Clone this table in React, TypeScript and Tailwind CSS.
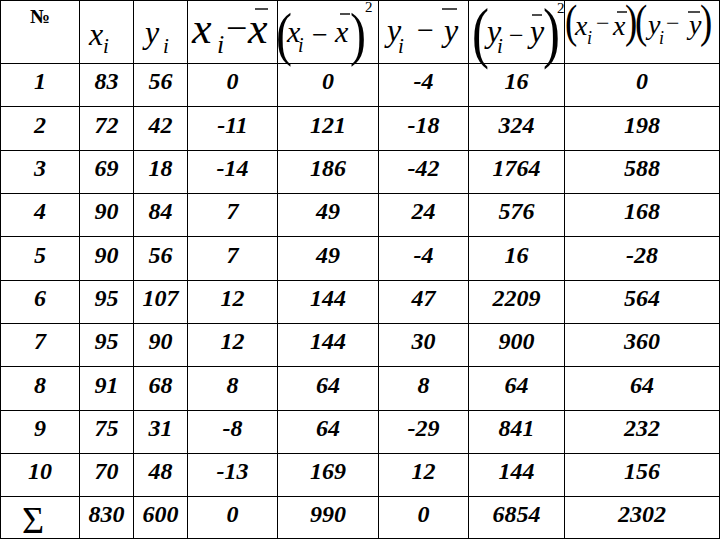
import React from "react";

const FONT = "Liberation Serif";

type P = { x: number; y: number; s: number; t: string; it?: boolean };

function T({ x, y, s, t, it }: P) {
  return (
    <text x={x} y={y} fontSize={s} fontFamily={FONT} fontStyle={it ? "italic" : "normal"} fill="#000">
      {t}
    </text>
  );
}

function Paren({ x, y, s, t, sx = 0.8 }: { x: number; y: number; s: number; t: string; sx?: number }) {
  return (
    <text
      transform={`translate(${x} ${y}) scale(${sx} 1)`}
      x={0}
      y={0}
      fontSize={s}
      fontFamily={FONT}
      fill="#000"
    >
      {t}
    </text>
  );
}

function Bar({ x1, x2, y }: { x1: number; x2: number; y: number }) {
  return <line x1={x1} x2={x2} y1={y} y2={y} stroke="#000" strokeWidth={1.4} />;
}

function Formula({ children }: { children: React.ReactNode }) {
  return (
    <svg width="100%" height="100%" className="block overflow-visible">
      {children}
    </svg>
  );
}

const rows: (string | number)[][] = [
  [1, 83, 56, 0, 0, -4, 16, 0],
  [2, 72, 42, -11, 121, -18, 324, 198],
  [3, 69, 18, -14, 186, -42, 1764, 588],
  [4, 90, 84, 7, 49, 24, 576, 168],
  [5, 90, 56, 7, 49, -4, 16, -28],
  [6, 95, 107, 12, 144, 47, 2209, 564],
  [7, 95, 90, 12, 144, 30, 900, 360],
  [8, 91, 68, 8, 64, 8, 64, 64],
  [9, 75, 31, -8, 64, -29, 841, 232],
  [10, 70, 48, -13, 169, 12, 144, 156],
];

const sums = [830, 600, 0, 990, 0, 6854, 2302];

function Num({ v }: { v: string | number }) {
  return (
    <div className="bg-white flex items-center justify-center pb-[8px]">
      <span className="font-['Liberation_Serif'] font-bold italic text-[24px] text-black">{String(v)}</span>
    </div>
  );
}

export default function App() {
  return (
    <div className="w-[720px] h-[540px] bg-white">
      <div className="grid w-[720px] bg-black p-px gap-px grid-cols-[78px_53px_53px_89px_100px_89px_95px_154px] grid-rows-[62px_42px_43px_42px_42px_43px_42px_42px_43px_42px_42px_41px]">
        <div className="bg-white relative z-10 flex justify-center pt-[5px]">
          <span className="font-['Liberation_Serif'] font-bold text-[20px] leading-none text-black">№</span>
        </div>
        <div className="bg-white relative z-10">
          <Formula>
            <T x={9} y={44} s={32} t="x" it />
            <T x={23} y={52} s={21} t="i" it />
          </Formula>
        </div>
        <div className="bg-white relative z-10">
          <Formula>
            <T x={11} y={42} s={32} t="y" it />
            <T x={29} y={52} s={21} t="i" it />
          </Formula>
        </div>
        <div className="bg-white relative z-10">
          <Formula>
            <T x={4} y={42} s={44} t="x" it />
            <T x={29} y={52} s={26} t="i" it />
            <T x={38} y={40} s={38} t="−" />
            <T x={60} y={42} s={44} t="x" it />
            <Bar x1={67} x2={80} y={8} />
          </Formula>
        </div>
        <div className="bg-white relative z-10">
          <Formula>
            <Paren x={-2} y={53} s={60} t="(" />
            <T x={9} y={41} s={30} t="x" it />
            <T x={20} y={51} s={20} t="i" it />
            <T x={34} y={43} s={28} t="−" />
            <T x={57} y={41} s={30} t="x" it />
            <Bar x1={62} x2={72} y={13} />
            <Paren x={72} y={53} s={60} t=")" />
            <T x={87} y={11} s={15} t="2" />
          </Formula>
        </div>
        <div className="bg-white relative z-10">
          <Formula>
            <T x={8} y={40} s={32} t="y" it />
            <T x={19} y={52} s={21} t="i" it />
            <T x={38} y={38.5} s={30} t="−" />
            <T x={65} y={40} s={32} t="y" it />
            <Bar x1={63} x2={78} y={8} />
          </Formula>
        </div>
        <div className="bg-white relative z-10">
          <Formula>
            <Paren x={3} y={54} s={68} t="(" sx={0.75} />
            <T x={18} y={41} s={32} t="y" it />
            <T x={28} y={52} s={21} t="i" it />
            <T x={40} y={42.5} s={26} t="−" />
            <T x={61} y={41} s={32} t="y" it />
            <Bar x1={63} x2={73} y={14} />
            <Paren x={74} y={54} s={68} t=")" sx={0.75} />
            <T x={88} y={12} s={15} t="2" />
          </Formula>
        </div>
        <div className="bg-white relative z-10">
          <Formula>
            <Paren x={0} y={36} s={46} t="(" />
            <T x={10} y={34} s={28} t="x" it />
            <T x={22} y={43} s={18} t="i" it />
            <T x={31} y={30} s={24} t="−" />
            <T x={48} y={34} s={28} t="x" it />
            <Bar x1={52} x2={62} y={11} />
            <Paren x={60} y={36} s={46} t=")" />
            <Paren x={70} y={36} s={46} t="(" />
            <T x={83} y={33} s={28} t="y" it />
            <T x={94} y={43} s={18} t="i" it />
            <T x={101} y={30} s={24} t="−" />
            <T x={124} y={33} s={28} t="y" it />
            <Bar x1={123} x2={135} y={11} />
            <Paren x={135} y={36} s={46} t=")" />
          </Formula>
        </div>

        {rows.map((r, i) => (
          <React.Fragment key={i}>
            {r.map((v, j) => (
              <Num key={j} v={v} />
            ))}
          </React.Fragment>
        ))}

        <div className="bg-white pl-[21px] pt-[4px]">
          <span className="block font-['Liberation_Serif'] text-[38px] leading-none text-black">Σ</span>
        </div>
        {sums.map((v, j) => (
          <Num key={j} v={v} />
        ))}
      </div>
    </div>
  );
}
